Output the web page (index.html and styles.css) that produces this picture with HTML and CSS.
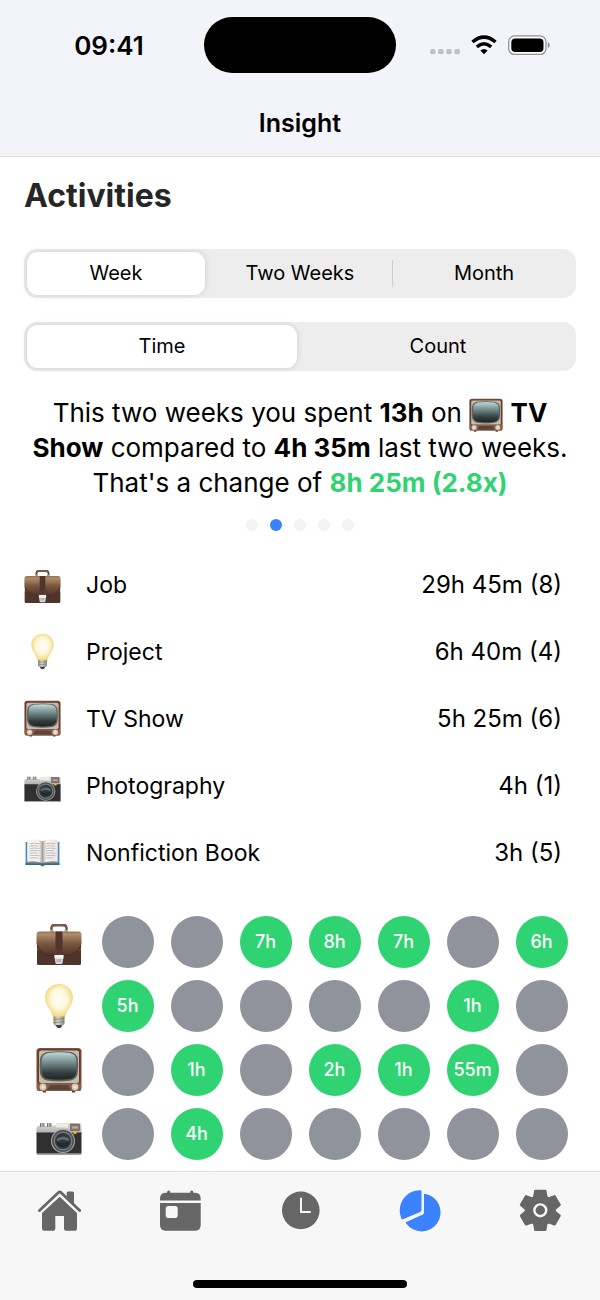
FILE: index.html
```html
<!doctype html>
<html lang="en">
    <head>
    <meta charset="utf-8">
    <meta name="viewport" content="width=device-width, initial-scale=1">
    <title>Insight</title>
    <link rel="stylesheet" href="styles.css">
    </head>

    <body>
        <svg class="defs" aria-hidden="true">
            <defs>
                <linearGradient id="leather" x1="0" y1="0" x2="0" y2="1">
                    <stop offset="0" stop-color="#94704f"/>
                    <stop offset=".12" stop-color="#b08c6c"/>
                    <stop offset=".5" stop-color="#7b573f"/>
                    <stop offset="1" stop-color="#50342a"/>
                </linearGradient>
                <radialGradient id="glow" cx=".5" cy=".45" r=".55">
                    <stop offset="0" stop-color="#fffefa"/>
                    <stop offset=".55" stop-color="#fdf7dc"/>
                    <stop offset="1" stop-color="#f3d673"/>
                </radialGradient>
                <linearGradient id="metal" x1="0" y1="0" x2="1" y2="0">
                    <stop offset="0" stop-color="#8a8780"/>
                    <stop offset=".4" stop-color="#dddad2"/>
                    <stop offset="1" stop-color="#85827b"/>
                </linearGradient>
                <linearGradient id="screen" x1="0" y1="0" x2="0" y2="1">
                    <stop offset="0" stop-color="#bfdad9"/>
                    <stop offset=".4" stop-color="#6f8786"/>
                    <stop offset=".75" stop-color="#343d3d"/>
                    <stop offset="1" stop-color="#202424"/>
                </linearGradient>
                <linearGradient id="silver" x1="0" y1="0" x2="0" y2="1">
                    <stop offset="0" stop-color="#dedede"/>
                    <stop offset="1" stop-color="#aaaaaa"/>
                </linearGradient>
                <linearGradient id="pageLeft" x1="0" y1="0" x2="1" y2="0">
                    <stop offset="0" stop-color="#f4f1ee"/>
                    <stop offset=".75" stop-color="#f7f5f2"/>
                    <stop offset="1" stop-color="#aaa5a2"/>
                </linearGradient>
                <linearGradient id="pageRight" x1="0" y1="0" x2="1" y2="0">
                    <stop offset="0" stop-color="#aaa5a2"/>
                    <stop offset=".25" stop-color="#f7f5f2"/>
                    <stop offset="1" stop-color="#e8e5e2"/>
                </linearGradient>
            </defs>

            <symbol id="briefcase" viewBox="0 0 46 46">
                <path d="M15.500 13V9q0-3 3-3h9q3 0 3 3v4" fill="none" stroke="#3d2a22" stroke-width="2"/>
                <path d="M14.500 10q0-5 4-5h9q4 0 4 5l-2-1.500q-1-1-3-1h-7q-2 0-3 1z" fill="#805b45"/>
                <path d="M14 13v-2.500h3.500V13zM28.500 13v-2.500H32V13z" fill="#aaa29a"/>
                <path d="M1 25h44v19q0 2-2 2H3q-2 0-2-2z" fill="#60412f"/>
                <path d="M1 32h44v12q0 2-2 2H3q-2 0-2-2z" fill="#4f342a"/>
                <path d="M.5 16q0-3.500 3-3.500h39q3 0 3 3.500v9q-4 9-12 11.500H12.500Q4.500 34 .5 25z" fill="url(#leather)"/>
                <path d="M1 26q5 9 12 10.500h20Q40 35 45 26" fill="none" stroke="#412a21" stroke-width=".8"/>
                <path d="M19.500 12.500h7V31h-7z" fill="#50362a"/>
                <path d="M18 37v-3q1-3 5-3t5 3v3z" fill="#5a3a2c"/>
                <path d="M18.500 36.500h9l-.8 7q-.2 1.500-1.700 1.500h-4q-1.500 0-1.700-1.500z" fill="#d4d3d6"/>
                <path d="M18.500 36h9v3.500h-9z" fill="#f2f1f3"/>
                <path d="M20.500 40h5v3h-5z" fill="#b8b7bd"/>
            </symbol>

            <symbol id="bulb" viewBox="0 0 46 46">
                <path d="M23 1.500c8 0 13.500 5.500 13.500 13 0 5-2 8-4.500 11.500-2 3-2.700 5-3 8H17c-.3-3-1-5-3-8-2.500-3.500-4.500-6.500-4.500-11.500 0-7.500 5.500-13 13.500-13z" fill="url(#glow)" stroke="#edd27b" stroke-width=".7"/>
                <path d="M17.500 33.500h11v6.500q0 2-3 2.500h-5q-3-.5-3-2.500z" fill="url(#metal)"/>
                <path d="M17.500 36.500l11-.8M17.500 39.500l11-.8" stroke="#77746e" stroke-width=".7"/>
                <path d="M19.500 42h7l-1.500 2.500q-2 1-4 0z" fill="#42403d"/>
            </symbol>

            <symbol id="tv" viewBox="0 0 46 46">
                <path d="M6 43h4v2.500H7zM36 43h4l-1 2.500h-3z" fill="#6d3a2d"/>
                <rect x=".5" y="1" width="45" height="43" rx="3.500" fill="#82503f"/>
                <rect x="1.500" y="2" width="43" height="34" rx="2.500" fill="#663a2e"/>
                <rect x="3" y="3.500" width="40" height="32.500" rx="2" fill="#c6bda9"/>
                <path d="M11 5q12-1.500 24 0 6 1.500 6.800 7 .7 7.500 0 14-1 6-7 7.500-12 1.800-24 0-6-1.500-6.800-7.500-.7-6.500 0-14Q5 6.500 11 5z" fill="#5b6260"/>
                <path d="M12 6q11-1.300 22 0 5.500 1.300 6.200 6.500.7 6.500 0 13-.8 5.500-6.200 6.500-11 1.600-22 0-5.400-1-6.200-6.500-.7-6.500 0-13Q6.500 7.300 12 6z" fill="url(#screen)"/>
                <path d="M1 36.500h44v6q0 1.500-1.500 1.500h-41Q1 44 1 42.500z" fill="#8e5b49"/>
                <path d="M14 38h18l3 5H11z" fill="#57463f"/>
                <circle cx="7" cy="40" r="3.400" fill="#d3cbb9"/>
                <circle cx="39" cy="40" r="3.400" fill="#d3cbb9"/>
                <circle cx="7" cy="40" r="1.500" fill="#eee8da"/>
                <circle cx="39" cy="40" r="1.500" fill="#eee8da"/>
            </symbol>

            <symbol id="camera" viewBox="0 0 46 46">
                <path d="M.5 17q0-2 2-2.500h17l2-2.500h22q2 0 2 2v9H.5z" fill="url(#silver)"/>
                <path d="M4 12h5v4H4zM11 12h5v4h-5z" fill="#bbb"/>
                <path d="M4.500 12v4M7 12v4M11.500 12v4M14 12v4" stroke="#666" stroke-width=".8"/>
                <rect x="20" y="12.500" width="12" height="4" fill="#eeebdb"/>
                <rect x="34.500" y="13" width="9" height="6.500" fill="#84776f" stroke="#555" stroke-width=".6"/>
                <path d="M36 16.500h6" stroke="#c4aaa0" stroke-width="2"/>
                <path d="M.5 21.500h45V42q0 1.500-1.500 1.500H2Q.5 43.500.5 42z" fill="#303030"/>
                <path d="M1 42.800h44" stroke="#a5a5a5" stroke-width="1.300"/>
                <circle cx="27" cy="30" r="12" fill="#a8a8a8"/>
                <circle cx="27" cy="30" r="11" fill="#4e5153"/>
                <circle cx="27" cy="30" r="9.500" fill="#777b7e"/>
                <circle cx="27" cy="30" r="8" fill="#33383b"/>
                <path d="M20.500 28q6.500-5 13 0l-1 2q-6-3-11 0z" fill="#626a6e"/>
                <path d="M20 31q7 2 14 0-2 5-7 5t-7-5z" fill="#25292b"/>
                <circle cx="39" cy="21.500" r="1.700" fill="#ecb828"/>
            </symbol>

            <symbol id="book" viewBox="0 0 46 46">
                <path d="M2 10h42v28.500H26l-2 1.500h-2l-2-1.500H2z" fill="#3c8db9"/>
                <path d="M2 36h42v2.500H2z" fill="#246f98"/>
                <path d="M4 9h38v27.500H4z" fill="#8d8985"/>
                <path d="M4 8q11-3.500 19 1v27q-8-3-19-1.500z" fill="url(#pageLeft)"/>
                <path d="M42 8q-11-3.500-19 1v27q8-3 19-1.500z" fill="url(#pageRight)"/>
                <path d="M7 12q6-1 12 0M7 15q6-1 11 0M7 18q6-1 12 0M7 21q6-1 12 0M7 24q6-1 10 0M7 27q6-1 12 0M7 30q6-1 11 0M27 12q6-1 12 0M27 15q6-1 11 0M27 18q6-1 12 0M27 21q6-1 10 0M27 24q6-1 12 0M27 27q6-1 12 0M27 30q6-1 9 0" fill="none" stroke="#aaa6a8" stroke-width=".9"/>
                <path d="M20 37.500h6l-2 2.500h-2z" fill="#6d6840"/>
            </symbol>
        </svg>

        <header class="top-bar">
            <div class="status-bar">
                <span class="clock">09:41</span>
                <span class="island"></span>
                <div class="status-icons">
                    <svg class="signal" viewBox="0 0 30 20" aria-hidden="true">
                        <g fill="#c2c2c4">
                            <rect x="0" y="14" width="5.600" height="5.300" rx="1.800"/>
                            <rect x="8" y="14" width="5.600" height="5.300" rx="1.800"/>
                            <rect x="16.200" y="14" width="5.600" height="5.300" rx="1.800"/>
                            <rect x="24.300" y="14" width="5.600" height="5.300" rx="1.800"/>
                        </g>
                    </svg>
                    <svg class="wifi" viewBox="0 0 26 20" aria-hidden="true">
                        <path d="M1.500 7q11.500-9.800 23 0M5.800 11.800q7.200-6.200 14.400 0" fill="none" stroke="#000" stroke-width="3.500"/>
                        <path d="M9.300 15.500q3.700-3.200 7.400 0L13 19.200z"/>
                    </svg>
                    <svg class="battery" viewBox="0 0 42 20" aria-hidden="true">
                        <rect x=".7" y=".9" width="37.300" height="18.600" rx="6" fill="#fff" fill-opacity=".5" stroke="#919194" stroke-width="1.300"/>
                        <rect x="3.300" y="3.600" width="32.200" height="13.400" rx="4"/>
                        <path d="M39.800 7q2 1.200 2 3.100t-2 3.100z" fill="#919194"/>
                    </svg>
                </div>
            </div>
            <h1 class="screen-title">Insight</h1>
        </header>

        <main class="content">
            <h2 class="section-title">Activities</h2>

            <div class="segmented" role="radiogroup" aria-label="Period">
                <label class="segment"><input type="radio" name="period" checked><span>Week</span></label>
                <label class="segment"><input type="radio" name="period"><span>Two Weeks</span></label>
                <label class="segment"><input type="radio" name="period"><span>Month</span></label>
            </div>
            <div class="segmented" role="radiogroup" aria-label="Measure">
                <label class="segment"><input type="radio" name="measure" checked><span>Time</span></label>
                <label class="segment"><input type="radio" name="measure"><span>Count</span></label>
            </div>

            <p class="summary">This two weeks you spent <b>13h</b> on <svg class="emoji-inline"><use href="#tv"/></svg> <b>TV Show</b> compared to <b>4h 35m</b> last two weeks. That's a change of <b class="gain">8h 25m (2.8x)</b></p>

            <div class="pager">
                <span class="page"></span>
                <span class="page current"></span>
                <span class="page"></span>
                <span class="page"></span>
                <span class="page"></span>
            </div>

            <ul class="activities">
                <li class="activity"><svg class="emoji-list"><use href="#briefcase"/></svg><span class="name">Job</span><span class="total">29h 45m (8)</span></li>
                <li class="activity"><svg class="emoji-list"><use href="#bulb"/></svg><span class="name">Project</span><span class="total">6h 40m (4)</span></li>
                <li class="activity"><svg class="emoji-list"><use href="#tv"/></svg><span class="name">TV Show</span><span class="total">5h 25m (6)</span></li>
                <li class="activity"><svg class="emoji-list"><use href="#camera"/></svg><span class="name">Photography</span><span class="total">4h (1)</span></li>
                <li class="activity"><svg class="emoji-list"><use href="#book"/></svg><span class="name">Nonfiction Book</span><span class="total">3h (5)</span></li>
            </ul>

            <div class="days">
                <svg class="emoji-day"><use href="#briefcase"/></svg>
                <span class="day"></span>
                <span class="day"></span>
                <span class="day done">7h</span>
                <span class="day done">8h</span>
                <span class="day done">7h</span>
                <span class="day"></span>
                <span class="day done">6h</span>

                <svg class="emoji-day"><use href="#bulb"/></svg>
                <span class="day done">5h</span>
                <span class="day"></span>
                <span class="day"></span>
                <span class="day"></span>
                <span class="day"></span>
                <span class="day done">1h</span>
                <span class="day"></span>

                <svg class="emoji-day"><use href="#tv"/></svg>
                <span class="day"></span>
                <span class="day done">1h</span>
                <span class="day"></span>
                <span class="day done">2h</span>
                <span class="day done">1h</span>
                <span class="day done">55m</span>
                <span class="day"></span>

                <svg class="emoji-day"><use href="#camera"/></svg>
                <span class="day"></span>
                <span class="day done">4h</span>
                <span class="day"></span>
                <span class="day"></span>
                <span class="day"></span>
                <span class="day"></span>
                <span class="day"></span>
            </div>
        </main>

        <footer class="bottom-bar">
            <nav class="tabs">
                <a class="tab" href="#" aria-label="Home">
                    <svg class="tab-icon" viewBox="0 0 44 44">
                        <path d="M28.700 10V5q0-1.500 1.500-1.500h4.300q1.500 0 1.500 1.500v12z"/>
                        <path d="M1.500 22.500L20.200 4.700q1.500-1.400 3 0l18.500 17.800" fill="none" stroke="currentColor" stroke-width="2.800" stroke-linecap="round"/>
                        <path d="M21.700 8.700L39 25v15.500q0 2.200-2.200 2.200H28q-2 0-2-2V28h-8.700v12.700q0 2-2 2H6.200Q4 42.700 4 40.500V25z"/>
                    </svg>
                </a>
                <a class="tab" href="#" aria-label="Calendar">
                    <svg class="tab-icon" viewBox="0 0 44 44">
                        <path d="M2 12.400V11q0-6.300 5.500-6.300h1.600V4q0-1.600 1.600-1.600T12.300 4v.7h19.800V4q0-1.600 1.600-1.600T35.300 4v.7h1.900q5.500 0 5.500 6.300v1.400z"/>
                        <path fill-rule="evenodd" d="M2 15h40.700v22q0 5.700-5.500 5.700H7.500Q2 42.700 2 37zM10.500 18q-2.800 0-2.800 2.800v6.400q0 2.800 2.800 2.800h6.400q2.800 0 2.800-2.800v-6.400q0-2.800-2.800-2.800z"/>
                    </svg>
                </a>
                <a class="tab" href="#" aria-label="History">
                    <svg class="tab-icon" viewBox="0 0 44 44">
                        <circle cx="22.800" cy="22.400" r="18.800"/>
                        <path d="M23 9.800v14.100h9.700" fill="none" stroke="#f7f7f7" stroke-width="2"/>
                    </svg>
                </a>
                <a class="tab active" href="#" aria-label="Insight" aria-current="page">
                    <svg class="tab-icon" viewBox="0 0 44 44">
                        <path d="M22.300 2.300q1.200 0 1.200 1.200V22q0 1.300-1.200 1.900L4.800 31.300q-.9.400-1.300-.6A20.200 20.200 0 0 1 22.300 2.300z"/>
                        <path d="M26 6.400q0-1 1-.7A19 19 0 1 1 8 35.300q-.5-.8.400-1.200l16.400-7.500q1.200-.6 1.200-2z"/>
                    </svg>
                </a>
                <a class="tab" href="#" aria-label="Settings">
                    <svg class="tab-icon" viewBox="0 0 44 44">
                        <g transform="translate(22.300 22.300)">
                            <circle r="15.500"/>
                            <g stroke="currentColor" stroke-width="2.400" stroke-linejoin="round">
                                <path id="cog" d="M-5 -19.400H5L6.300 -12H-6.300zM-5 19.400H5L6.300 12H-6.300z"/>
                                <use href="#cog" transform="rotate(60)"/>
                                <use href="#cog" transform="rotate(120)"/>
                            </g>
                            <circle r="5.900" fill="none" stroke="#f7f7f7" stroke-width="2.400"/>
                        </g>
                    </svg>
                </a>
            </nav>
            <div class="home-indicator"></div>
        </footer>
    </body>
</html>
```

FILE: styles.css
```css
* {
    box-sizing: border-box;
}
body {
    margin: 0;
    min-height: 100vh;
    display: flex;
    flex-direction: column;
    background: #fff;
    color: #000;
    font-family: Inter, "Liberation Sans", sans-serif;
    font-size: 24px;
}
h1, h2, p, ul {
    margin: 0;
    padding: 0;
}
.defs {
    position: absolute;
    width: 0;
    height: 0;
}

.top-bar {
    background: #f3f4f9;
    border-bottom: 1px solid #dfdfe3;
}
.status-bar {
    display: grid;
    grid-template-columns: 1fr 192px 1fr;
    align-items: center;
    padding: 17px 0;
}
.clock {
    padding-left: 14px;
    font-size: 26px;
    font-weight: 600;
    text-align: center;
}
.island {
    height: 56px;
    border-radius: 28px;
    background: #000;
}
.status-icons {
    display: flex;
    justify-content: center;
    align-items: center;
    gap: 11px;
    padding-right: 16px;
}
.signal {
    width: 30px;
    height: 20px;
}
.wifi {
    width: 26px;
    height: 20px;
}
.battery {
    width: 42px;
    height: 20px;
}
.screen-title {
    padding: 16px 0;
    font-size: 25px;
    font-weight: 600;
    line-height: 34px;
    text-align: center;
}

.content {
    padding: 18px 24px 8px;
}
.section-title {
    margin-bottom: 32px;
    color: #262626;
    font-size: 32px;
    font-weight: 700;
    line-height: 42px;
}

.segmented {
    display: flex;
    height: 49px;
    margin-bottom: 24px;
    border-radius: 13px;
    background: #ededed;
}
.segment {
    flex: 1 1 0;
    display: flex;
    padding: 3px;
    position: relative;
    font-size: 20px;
    cursor: pointer;
}
.segment input {
    position: absolute;
    opacity: 0;
}
.segment span {
    flex: 1;
    border-radius: 11px;
    line-height: 42px;
    text-align: center;
}
.segment input:checked + span {
    background: #fff;
    box-shadow: 0 0 6px rgba(0, 0, 0, .14);
}
.segment + .segment + .segment::before {
    content: "";
    position: absolute;
    left: 0;
    top: 11px;
    bottom: 11px;
    width: 1px;
    background: #cfcfcf;
}

.summary {
    font-size: 26px;
    line-height: 35px;
    text-align: center;
}
.summary b {
    font-weight: 700;
}
.summary .gain {
    color: #2fd371;
}
.emoji-inline {
    width: 34px;
    height: 34px;
    margin: -4px 0;
    vertical-align: -6px;
}
.pager {
    display: flex;
    justify-content: center;
    gap: 12px;
    padding: 19px 0 20px;
}
.page {
    width: 12px;
    height: 12px;
    border-radius: 50%;
    background: #f3f3f4;
}
.page.current {
    background: #3a82ff;
}

.activities {
    margin-bottom: 30px;
    list-style: none;
}
.activity {
    display: flex;
    align-items: center;
    height: 67px;
    padding-right: 14px;
}
.emoji-list {
    width: 37px;
    height: 37px;
    margin-right: 25px;
}
.name {
    font-size: 23px;
}
.total {
    margin-left: auto;
}

.days {
    display: grid;
    grid-template-columns: repeat(8, 1fr);
    row-gap: 12px;
    justify-items: center;
    align-items: center;
}
.emoji-day {
    width: 46px;
    height: 46px;
}
.day {
    width: 52px;
    height: 52px;
    border-radius: 50%;
    background: #90939b;
    color: #fff;
    font-size: 18px;
    font-weight: 500;
    line-height: 52px;
    text-align: center;
}
.day.done {
    background: #2fd371;
}

.bottom-bar {
    margin-top: auto;
    padding: 16px 0 12px;
    border-top: 1px solid #e1e1e1;
    background: #f7f7f7;
}
.tabs {
    display: flex;
    margin-bottom: 48px;
}
.tab {
    flex: 1;
    display: flex;
    justify-content: center;
    color: #666;
}
.tab.active {
    color: #3a82ff;
}
.tab-icon {
    width: 44px;
    height: 44px;
    fill: currentColor;
}
.home-indicator {
    width: 214px;
    height: 8px;
    margin: 0 auto;
    border-radius: 4px;
    background: #000;
}
```
